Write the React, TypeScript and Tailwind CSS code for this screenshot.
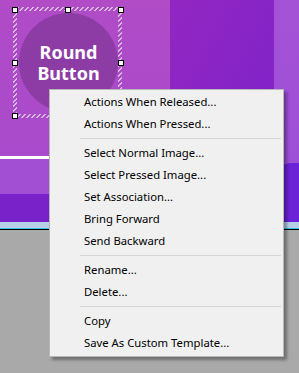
import React from "react";

type Entry = { label: string } | { sep: true };

const menu: Entry[] = [
  { label: "Actions When Released..." },
  { label: "Actions When Pressed..." },
  { sep: true },
  { label: "Select Normal Image..." },
  { label: "Select Pressed Image..." },
  { label: "Set Association..." },
  { label: "Bring Forward" },
  { label: "Send Backward" },
  { sep: true },
  { label: "Rename..." },
  { label: "Delete..." },
  { sep: true },
  { label: "Copy" },
  { label: "Save As Custom Template..." },
];

// selection handles sit on the canvas at fixed points
const handles = [
  [15, 10],
  [68, 10],
  [121, 10],
  [15, 63],
  [121, 63],
  [15, 116],
];

export default function App() {
  return (
    <div className="relative flex h-[373px] w-[299px] flex-col overflow-hidden bg-[#a9a9a9] font-['Noto_Sans',sans-serif]">
      {/* design canvas */}
      <div className="relative flex h-[222px] w-full shrink-0">
        <div className="flex w-[170px] flex-col">
          <div className="flex-1 bg-gradient-to-b from-[#b14bc6] to-[#a84bcc]" />
          <div className="h-[3px] bg-white" />
          <div className="h-[35px] bg-[#a34fd3]" />
          <div className="h-[28px] bg-[#7a22c9]" />
        </div>
        <div className="flex w-[104px] flex-col">
          <div className="flex-1 bg-gradient-to-br from-[#9226c2] to-[#7c22ca]" />
          <div className="h-[28px] bg-[#7622cc]" />
        </div>
        <div className="flex flex-1 flex-col bg-gradient-to-b from-[#a553d6] to-[#9a4ed8]">
          <div className="h-[163px]" />
          <div className="flex-1 rounded-tl-[18px] bg-[#6b22d8]" />
        </div>

        {/* round button */}
        <div className="absolute left-[19px] top-[13px] flex h-[99px] w-[99px] flex-col items-center justify-center rounded-full bg-[#8d3ca6] text-[18px] font-bold leading-[21px] text-white">
          <span>Round</span>
          <span>Button</span>
        </div>

        {/* selection */}
        <div className="absolute left-[13px] top-[7px] h-[111px] w-[109px] border-[4px] border-solid [border-image:repeating-linear-gradient(135deg,rgba(225,225,225,0.75)_0_1.4px,transparent_1.4px_3.5px)_4]" />
        {handles.map(([x, y], i) => (
          <div
            key={i}
            className="absolute h-[6px] w-[6px] border border-black bg-white"
            style={{ left: x - 3, top: y - 3 }}
          />
        ))}
      </div>
      <div className="h-[6px] shrink-0 bg-[#b5d0e6]" />
      <div className="h-px shrink-0 bg-[#3cbfe0]" />
      <div className="h-px shrink-0 bg-black" />

      {/* context menu */}
      <div className="absolute left-[49px] top-[89px] w-[235px] border border-[#b8b8b8] bg-[#f0f0f0] pb-[2px] pt-px text-[11.3px] text-black shadow-[3px_3px_3px_rgba(0,0,0,0.35)]">
        {menu.map((m, i) =>
          "sep" in m ? (
            <div key={i} className="ml-[30px] mr-[2px] py-[3px]">
              <div className="h-px bg-[#d5d5d5]" />
            </div>
          ) : (
            <div key={i} className="flex h-[22px] items-center pl-[34px]">
              {m.label}
            </div>
          )
        )}
      </div>
    </div>
  );
}
